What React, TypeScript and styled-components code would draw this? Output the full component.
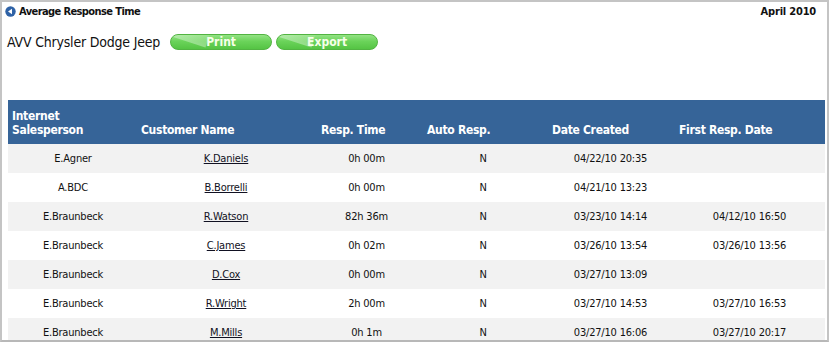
import React from "react";
import styled, { createGlobalStyle } from "styled-components";

const GlobalStyle = createGlobalStyle`
    html, body {
        margin: 0;
        padding: 0;
        background: #ffffff;
        overflow: hidden;
    }
`;

const FONT = `"DejaVu Sans Condensed", "DejaVu Sans", Verdana, sans-serif`;

const Frame = styled.div`
    width: 829px;
    height: 342px;
    box-sizing: border-box;
    border: 2px solid #c4c4c4;
    border-bottom-color: #b8b8b8;
    overflow: hidden;
    font-family: ${FONT};
    color: #111111;
`;

const TopBar = styled.div`
    display: flex;
    justify-content: space-between;
    align-items: center;
    height: 18px;
    padding: 0 11px 0 3px;
`;

const Title = styled.div`
    display: flex;
    align-items: center;
    gap: 3px;
    font-size: 11px;
    font-weight: bold;
    letter-spacing: -0.6px;
`;

const Period = styled.div`
    font-size: 11px;
    font-weight: bold;
    letter-spacing: -0.2px;
`;

const CompanyRow = styled.div`
    display: flex;
    align-items: center;
    gap: 4px;
    height: 16px;
    margin-top: 14px;
    padding-left: 5px;
`;

const Company = styled.span`
    font-size: 14px;
    letter-spacing: -0.2px;
    margin-right: 6px;
`;

const GreenButton = styled.button`
    position: relative;
    width: 102px;
    height: 16px;
    padding: 0;
    border: 1px solid #52b442;
    border-radius: 8px;
    overflow: hidden;
    background: linear-gradient(#93e384 0%, #6bd35a 45%, #55c444 100%);
    color: #f6ffe9;
    font-family: ${FONT};
    font-size: 12px;
    font-weight: bold;
    line-height: 14px;
    cursor: pointer;

    &::before {
        content: "";
        position: absolute;
        left: -6px;
        top: -10px;
        width: 44px;
        height: 16px;
        transform: rotate(18deg);
        background: linear-gradient(rgba(255, 255, 255, 0), rgba(255, 255, 255, 0.35));
    }

    span {
        position: relative;
    }
`;

const Table = styled.table`
    margin: 50px 0 0 6px;
    width: 817px;
    border-collapse: collapse;
    table-layout: fixed;
    font-size: 11px;
`;

const HeadCell = styled.th<{ $indent: number }>`
    height: 44px;
    box-sizing: border-box;
    padding: 0 0 7px ${(p) => p.$indent}px;
    background: #366498;
    color: #ffffff;
    font-size: 12px;
    font-weight: bold;
    line-height: 14px;
    letter-spacing: -0.3px;
    text-align: left;
    vertical-align: bottom;
`;

const Row = styled.tr<{ $shaded: boolean }>`
    background: ${(p) => (p.$shaded ? "#f2f2f2" : "#ffffff")};
`;

const Cell = styled.td`
    height: 29px;
    padding: 0;
    text-align: center;
    vertical-align: middle;
    letter-spacing: -0.2px;
    white-space: nowrap;
`;

const CustomerLink = styled.a`
    color: #111122;
    text-decoration: underline;
`;

const BackIcon = () => (
    <svg width="11" height="11" viewBox="0 0 11 11">
        <circle cx="5.5" cy="5.5" r="5.2" fill="#2f62a6" />
        <path d="M3 5.5 L7 2.8 L7 8.2 Z" fill="#ffffff" />
    </svg>
);

const columns = [
    { label: ["Internet", "Salesperson"], width: 130, indent: 4 },
    { label: ["Customer Name"], width: 176, indent: 3 },
    { label: ["Resp. Time"], width: 105, indent: 7 },
    { label: ["Auto Resp."], width: 128, indent: 8 },
    { label: ["Date Created"], width: 127, indent: 5 },
    { label: ["First Resp. Date"], width: 151, indent: 5 },
];

const rows = [
    { sales: "E.Agner", customer: "K.Daniels", resp: "0h 00m", auto: "N", created: "04/22/10 20:35", first: "" },
    { sales: "A.BDC", customer: "B.Borrelli", resp: "0h 00m", auto: "N", created: "04/21/10 13:23", first: "" },
    { sales: "E.Braunbeck", customer: "R.Watson", resp: "82h 36m", auto: "N", created: "03/23/10 14:14", first: "04/12/10 16:50" },
    { sales: "E.Braunbeck", customer: "C.James", resp: "0h 02m", auto: "N", created: "03/26/10 13:54", first: "03/26/10 13:56" },
    { sales: "E.Braunbeck", customer: "D.Cox", resp: "0h 00m", auto: "N", created: "03/27/10 13:09", first: "" },
    { sales: "E.Braunbeck", customer: "R.Wright", resp: "2h 00m", auto: "N", created: "03/27/10 14:53", first: "03/27/10 16:53" },
    { sales: "E.Braunbeck", customer: "M.Mills", resp: "0h 1m", auto: "N", created: "03/27/10 16:06", first: "03/27/10 20:17" },
];

const App = () => {
    return (
        <>
            <GlobalStyle />
            <Frame>
                <TopBar>
                    <Title>
                        <BackIcon />
                        Average Response Time
                    </Title>
                    <Period>April 2010</Period>
                </TopBar>
                <CompanyRow>
                    <Company>AVV Chrysler Dodge Jeep</Company>
                    <GreenButton>
                        <span>Print</span>
                    </GreenButton>
                    <GreenButton>
                        <span>Export</span>
                    </GreenButton>
                </CompanyRow>
                <Table>
                    <colgroup>
                        {columns.map((c, i) => (
                            <col key={i} style={{ width: c.width }} />
                        ))}
                    </colgroup>
                    <thead>
                        <tr>
                            {columns.map((c, i) => (
                                <HeadCell key={i} $indent={c.indent}>
                                    {c.label.map((line, j) => (
                                        <div key={j}>{line}</div>
                                    ))}
                                </HeadCell>
                            ))}
                        </tr>
                    </thead>
                    <tbody>
                        {rows.map((r, i) => (
                            <Row key={i} $shaded={i % 2 === 0}>
                                <Cell>{r.sales}</Cell>
                                <Cell>
                                    <CustomerLink href="#">{r.customer}</CustomerLink>
                                </Cell>
                                <Cell>{r.resp}</Cell>
                                <Cell>{r.auto}</Cell>
                                <Cell>{r.created}</Cell>
                                <Cell>{r.first}</Cell>
                            </Row>
                        ))}
                    </tbody>
                </Table>
            </Frame>
        </>
    );
};

export default App;
